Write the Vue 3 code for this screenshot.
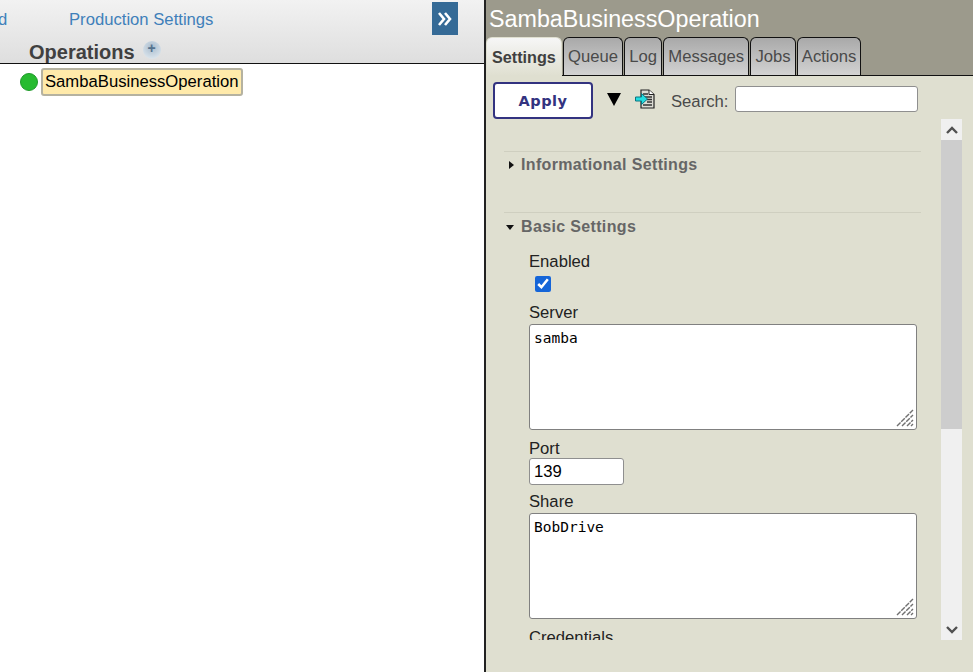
<template>
  <div class="page">
    <section class="left-pane">
      <header class="left-header">
        <div class="link-row">
          <a class="nav-link nav-link--cut">d</a>
          <a class="nav-link">Production Settings</a>
          <button class="expand-btn">
            <svg width="16" height="14" viewBox="0 0 16 14">
              <path d="M2 1l5 6-5 6M8 1l5 6-5 6" fill="none" stroke="#fff" stroke-width="2.600" />
            </svg>
          </button>
        </div>
        <div class="group-row">
          <span class="group-name">Operations</span>
          <span class="add-btn">+</span>
        </div>
      </header>
      <div class="tree-row">
        <span class="status-dot"></span>
        <span class="item-chip">SambaBusinessOperation</span>
      </div>
    </section>

    <section class="right-pane">
      <div class="title-band">
        <div class="title">SambaBusinessOperation</div>
        <nav class="tabs">
          <span
            v-for="tab in tabs"
            :key="tab"
            class="tab"
            :class="{ 'tab--active': tab === 'Settings' }"
          >{{ tab }}</span>
        </nav>
      </div>

      <div class="panel">
        <div class="toolbar">
          <button class="apply-btn">Apply</button>
          <span class="down-arrow"></span>
          <svg class="doc-icon" width="20" height="20" viewBox="0 0 20 20">
            <path d="M6 1h8l5 4.500V19H6z" fill="#dcdcd4" stroke="#222" stroke-width="1.200" />
            <path d="M14 1v4.500h5" fill="#fff" stroke="#222" />
            <path d="M8 5h5M8 8h9M12 10.500h5M12 13h5M8 16h9" stroke="#333" stroke-width="1.300" />
            <path d="M0.500 8h6V4.500l6 5.500-6 5.500V12h-6z" fill="#22dde0" stroke="#0b7480" stroke-width="1" />
          </svg>
          <label class="search-label">Search:</label>
          <input class="search-input" />
        </div>

        <div class="scroll-wrap">
          <div class="form-area">
            <div class="section section--info">
              <span class="caret caret--right"></span>
              <span class="section-title">Informational Settings</span>
            </div>
            <div class="section section--basic">
              <span class="caret caret--down"></span>
              <span class="section-title">Basic Settings</span>
            </div>

            <div class="fields">
              <label class="field-label">Enabled</label>
              <input class="field-check" type="checkbox" checked />

              <label class="field-label">Server</label>
              <div class="area-wrap">
                <textarea class="field-area" :value="server"></textarea>
                <svg class="grip" width="18" height="18" viewBox="0 0 18 18">
                  <path d="M1 17 17 1M6 17 17 6M11 17l6-6M15 17l2-2" stroke="#707070" stroke-width="1.400" stroke-dasharray="5 1" />
                </svg>
              </div>

              <label class="field-label field-label--low">Port</label>
              <input class="field-input" value="139" />

              <label class="field-label">Share</label>
              <div class="area-wrap">
                <textarea class="field-area" :value="share"></textarea>
                <svg class="grip" width="18" height="18" viewBox="0 0 18 18">
                  <path d="M1 17 17 1M6 17 17 6M11 17l6-6M15 17l2-2" stroke="#707070" stroke-width="1.400" stroke-dasharray="5 1" />
                </svg>
              </div>

              <label class="field-label field-label--low">Credentials</label>
            </div>
          </div>

          <div class="scrollbar">
            <span class="scroll-btn">
              <svg width="12" height="8" viewBox="0 0 12 8"><path d="M1 7 6 2l5 5" fill="none" stroke="#505050" stroke-width="2.400" /></svg>
            </span>
            <span class="scroll-thumb"></span>
            <span class="scroll-track"></span>
            <span class="scroll-btn">
              <svg width="12" height="8" viewBox="0 0 12 8"><path d="M1 1l5 5 5-5" fill="none" stroke="#505050" stroke-width="2.400" /></svg>
            </span>
          </div>
        </div>
      </div>
    </section>
  </div>
</template>

<script setup>
const tabs = ['Settings', 'Queue', 'Log', 'Messages', 'Jobs', 'Actions']
const server = 'samba'
const share = 'BobDrive'
</script>

<style>
html,
body {
  margin: 0;
  overflow: hidden;
  background: #fff;
}
</style>

<style scoped>
.page {
  display: flex;
  width: 973px;
  height: 672px;
  overflow: hidden;
  font-family: "Liberation Sans", Arial, sans-serif;
}

.left-pane {
  width: 484px;
  flex: none;
  border-right: 2px solid #222;
  box-sizing: content-box;
  background: #fff;
}

.left-header {
  height: 63px;
  border-bottom: 1px solid #111;
  background: linear-gradient(#f2f2f2, #dedede);
}

.link-row {
  display: flex;
  align-items: flex-start;
  height: 37px;
}

.nav-link {
  margin-top: 10px;
  font-size: 16.670px;
  line-height: 19px;
  color: #3f80ba;
}

.nav-link--cut {
  width: 71px;
  margin-left: -2px;
}

.expand-btn {
  display: flex;
  align-items: center;
  justify-content: center;
  width: 26px;
  height: 33px;
  margin: 2px 0 0 219px;
  padding: 0;
  border: 0;
  background: #356a96;
}

.group-row {
  display: flex;
  align-items: flex-start;
  padding-left: 29px;
  height: 26px;
}

.group-name {
  margin-top: 4px;
  font-size: 20px;
  line-height: 22px;
  font-weight: 700;
  color: #404040;
}

.add-btn {
  width: 18px;
  height: 18px;
  margin: 4px 0 0 8px;
  border-radius: 50%;
  background: radial-gradient(circle at 50% 35%, #a9bccd, #cfdbe5 60%, #eaeff2);
  color: #55738f;
  font-size: 14px;
  font-weight: 700;
  line-height: 15px;
  text-align: center;
}

.tree-row {
  display: flex;
  align-items: center;
  height: 36px;
  padding-left: 20px;
}

.status-dot {
  width: 18px;
  height: 18px;
  border-radius: 50%;
  border: 0.5px solid #1f9a2a;
  box-sizing: border-box;
  background: #27bb30;
}

.item-chip {
  margin-left: 3px;
  padding: 2px 2px 3px;
  border: 2px solid #b5b2a0;
  border-radius: 3px;
  background: #ffeaaa;
  color: #000;
  font-size: 16.670px;
  line-height: 19px;
}

.right-pane {
  flex: 1;
  min-width: 0;
  display: flex;
  flex-direction: column;
  background: #dfdfd0;
}

.title-band {
  height: 75px;
  flex: none;
  border-bottom: 1px solid #111;
  background: #9c9a8c;
}

.title {
  height: 37px;
  padding-left: 3px;
  color: #fff;
  font-size: 23.300px;
  line-height: 38px;
}

.tabs {
  display: flex;
  gap: 1px;
  height: 38px;
}

.tab {
  box-sizing: border-box;
  height: 38px;
  padding: 0 4.100px;
  border: 1px solid #111;
  border-bottom: 0;
  border-radius: 6px 6px 0 0;
  background: linear-gradient(#a9a9a9, #d2d2d2);
  color: #4a4a4a;
  font-size: 16.670px;
  line-height: 38px;
}

.tab--active {
  width: 76px;
  height: 39px;
  padding: 0 5px;
  border-color: #dfdfd0;
  background: linear-gradient(#f6f6f6, #dfdfd0);
  color: #404040;
  font-size: 16.200px;
  font-weight: 700;
}

.panel {
  flex: 1;
  min-height: 0;
  display: flex;
  flex-direction: column;
}

.toolbar {
  display: flex;
  align-items: flex-start;
  height: 43px;
  padding-left: 7px;
  flex: none;
}

.apply-btn {
  box-sizing: border-box;
  width: 100px;
  height: 37px;
  margin-top: 6px;
  padding-top: 2px;
  border: 2px solid #333380;
  border-radius: 4px;
  background: #fff;
  color: #333380;
  font-family: "DejaVu Sans", sans-serif;
  font-size: 14.500px;
  font-weight: 700;
  letter-spacing: 0.5px;
}

.down-arrow {
  width: 0;
  height: 0;
  margin: 17px 0 0 14px;
  border-left: 7px solid transparent;
  border-right: 7px solid transparent;
  border-top: 13px solid #000;
}

.doc-icon {
  margin: 13px 0 0 14px;
}

.search-label {
  margin: 16px 0 0 16px;
  color: #4a4a4a;
  font-size: 16.670px;
  line-height: 20px;
}

.search-input {
  box-sizing: border-box;
  width: 183px;
  height: 26px;
  margin: 10px 0 0 7px;
  border: 1px solid #8f8f8f;
  border-radius: 3px;
  background: #fff;
}

.scroll-wrap {
  flex: 1;
  min-height: 0;
  display: flex;
  align-items: flex-start;
}

.form-area {
  width: 455px;
  height: 521px;
  overflow: hidden;
  flex: none;
}

.section {
  display: flex;
  align-items: center;
  width: 417px;
  height: 24px;
  margin-left: 18px;
  padding-top: 1px;
  border-top: 1px solid #cfcfc0;
}

.section--info {
  margin-top: 32px;
}

.section--basic {
  margin-top: 35px;
  padding-top: 2px;
}

.section-title {
  margin-left: -1px;
  color: #666;
  font-size: 16px;
  font-weight: 700;
  letter-spacing: 0.35px;
}

.caret {
  width: 0;
  height: 0;
  margin-right: 8px;
  flex: none;
}

.caret--right {
  margin-left: 5px;
  border-top: 4.500px solid transparent;
  border-bottom: 4.500px solid transparent;
  border-left: 5px solid #111;
}

.caret--down {
  margin-left: 2px;
  border-left: 4.500px solid transparent;
  border-right: 4.500px solid transparent;
  border-top: 5px solid #111;
}

.fields {
  display: flex;
  flex-direction: column;
  align-items: flex-start;
  padding: 13px 0 0 43px;
}

.field-label {
  height: 20px;
  color: #222;
  font-size: 16.670px;
  line-height: 20px;
}

.field-label--low {
  height: 19px;
  padding-top: 1px;
}

.field-check {
  width: 16px;
  height: 16px;
  margin: 4px 0 11px 6px;
  accent-color: #1565d8;
}

.area-wrap {
  position: relative;
  height: 106px;
  margin: 1px 0 8px;
}

.field-area {
  display: block;
  box-sizing: border-box;
  width: 388px;
  height: 106px;
  margin: 0;
  padding: 4px;
  border: 1px solid #808080;
  border-radius: 3px;
  background: #fff;
  resize: none;
  color: #000;
  font-family: "DejaVu Sans Mono", monospace;
  font-size: 14.500px;
  line-height: 19px;
  outline: none;
}

.grip {
  position: absolute;
  right: 3px;
  bottom: 3px;
}

.field-input {
  box-sizing: border-box;
  width: 95px;
  height: 27px;
  margin: 0 0 7px;
  padding: 1px 4px;
  border: 1px solid #8f8f8f;
  border-radius: 3px;
  background: #fff;
  color: #000;
  font-family: "Liberation Sans", Arial, sans-serif;
  font-size: 16.670px;
}

.scrollbar {
  display: flex;
  flex-direction: column;
  width: 21px;
  height: 521px;
  flex: none;
}

.scroll-btn {
  display: flex;
  align-items: center;
  justify-content: center;
  height: 21px;
  flex: none;
  background: #f0f0f0;
}

.scroll-thumb {
  height: 289px;
  flex: none;
  background: #cdcdcd;
}

.scroll-track {
  flex: 1;
  background: #f0f0f0;
}
</style>
